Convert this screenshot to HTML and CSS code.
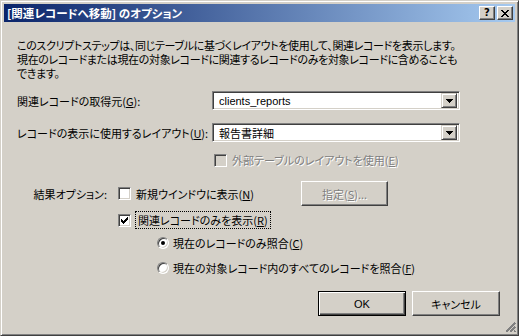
FILE: index.html
```html
<!DOCTYPE html>
<html>
<head>
    <title>[関連レコードへ移動] のオプション</title>
    <link rel="stylesheet" href="styles.css">
</head>
<body>
    <div class="dialog">
        <div class="titlebar">
            <span class="title">[関連レコードへ移動] のオプション</span>
            <div class="caption-buttons">
                <span class="cap-btn help">?</span>
                <span class="cap-btn close">
                    <svg width="8" height="7" viewBox="0 0 8 7" shape-rendering="crispEdges">
                        <path d="M0 0h2v1h-2zM6 0h2v1h-2zM1 1h2v1h-2zM5 1h2v1h-2zM2 2h4v1h-4zM3 3h2v1h-2zM2 4h4v1h-4zM1 5h2v1h-2zM5 5h2v1h-2zM0 6h2v1h-2zM6 6h2v1h-2z" fill="#000"/>
                    </svg>
                </span>
            </div>
        </div>

        <div class="content">
            <p class="intro">
                このスクリプトステップは、同じテーブルに基づくレイアウトを使用して、関連レコードを表示します。<br>
                現在のレコードまたは現在の対象レコードに関連するレコードのみを対象レコードに含めることも<br>
                できます。
            </p>

            <!-- related records source -->
            <div class="field-row first">
                <label class="field-label">関連レコードの取得元(<u>G</u>):</label>
                <div class="combo">
                    <span class="combo-value latin">clients_reports</span>
                    <span class="combo-arrow">
                        <svg width="7" height="4" viewBox="0 0 7 4" shape-rendering="crispEdges"><path d="M0 0h7v1h-1v1h-1v1h-1v1h-1v-1h-1v-1h-1v-1h-1z" fill="#000"/></svg>
                    </span>
                </div>
            </div>

            <div class="field-row">
                <label class="field-label">レコードの表示に使用するレイアウト(<u>U</u>):</label>
                <div class="combo">
                    <span class="combo-value">報告書詳細</span>
                    <span class="combo-arrow">
                        <svg width="7" height="4" viewBox="0 0 7 4" shape-rendering="crispEdges"><path d="M0 0h7v1h-1v1h-1v1h-1v1h-1v-1h-1v-1h-1v-1h-1z" fill="#000"/></svg>
                    </span>
                </div>
            </div>

            <div class="check-line external">
                <span class="checkbox disabled"></span>
                <span class="disabled-text">外部テーブルのレイアウトを使用(<u>E</u>)</span>
            </div>

            <!-- result options -->
            <div class="result-row">
                <span class="result-label">結果オプション:</span>
                <div class="check-line">
                    <span class="checkbox"></span>
                    <span>新規ウインドウに表示(<u>N</u>)</span>
                </div>
                <span class="button specify"><span class="disabled-text">指定(<u>S</u>)...</span></span>
            </div>

            <div class="check-line related">
                <span class="checkbox">
                    <svg width="7" height="7" viewBox="0 0 7 7" shape-rendering="crispEdges"><path d="M6 0h1v3h-1v1h-1v1h-1v1h-1v1h-1v-1h-1v-1h-1v-3h1v1h1v1h1v-1h1v-1h1v-1h1z" fill="#000"/></svg>
                </span>
                <span class="focus">関連レコードのみを表示(<u>R</u>)</span>
            </div>

            <div class="radio-line first-radio">
                <span class="radio on"></span>
                <span>現在のレコードのみ照合(<u>C</u>)</span>
            </div>
            <div class="radio-line">
                <span class="radio"></span>
                <span>現在の対象レコード内のすべてのレコードを照合(<u>F</u>)</span>
            </div>

            <div class="button-row">
                <span class="button default latin">OK</span>
                <span class="button">キャンセル</span>
            </div>
        </div>

        <svg class="grip" width="12" height="12" viewBox="0 0 12 12" shape-rendering="crispEdges">
            <g fill="#fff">
                <rect x="10" y="1" width="1" height="1"/><rect x="6" y="5" width="1" height="1"/><rect x="2" y="9" width="1" height="1"/>
            </g>
            <g stroke="#808080" stroke-width="2">
                <line x1="11" y1="2" x2="2" y2="11"/>
                <line x1="11" y1="6" x2="6" y2="11"/>
                <line x1="11" y1="10" x2="10" y2="11"/>
            </g>
        </svg>
    </div>
</body>
</html>
```

FILE: styles.css
```css
body {
    margin: 0;
    font-family: "Noto Sans CJK JP", sans-serif;
    font-size: 11px;
    line-height: 14px;
    font-feature-settings: "palt";
    color: #000;
}

u {
    text-decoration-thickness: 1px;
    text-underline-offset: 1px;
}

.dialog {
    position: relative;
    width: 519px;
    height: 336px;
    box-sizing: border-box;
    background-color: #d4d0c8;
    border: 1px solid;
    border-color: #d4d0c8 #404040 #404040 #d4d0c8;
    box-shadow: inset 1px 1px #fff, inset -1px -1px #808080;
    padding: 3px;
}

.titlebar {
    height: 18px;
    display: flex;
    align-items: center;
    justify-content: space-between;
    padding: 0 2px 0 3px;
    background: linear-gradient(to right, #0a246a, #a6caf0);
}

.title {
    color: #fff;
    font-weight: bold;
    font-size: 11.5px;
    line-height: 18px;
}

.caption-buttons {
    display: flex;
}

.cap-btn {
    width: 16px;
    height: 14px;
    box-sizing: border-box;
    display: flex;
    align-items: center;
    justify-content: center;
    background-color: #d4d0c8;
    border: 1px solid;
    border-color: #fff #404040 #404040 #fff;
    box-shadow: inset -1px -1px #808080;
    font-family: "DejaVu Sans", sans-serif;
    font-weight: bold;
    font-size: 10px;
}

.cap-btn.close {
    margin-left: 2px;
}

.content {
    padding: 16px 0 0 13px;
    white-space: nowrap;
}

.intro {
    margin: 0;
    letter-spacing: -0.35px;
}

.field-row {
    display: grid;
    grid-template-columns: 195px 248px;
    align-items: center;
    margin-top: 13px;
}

.field-row.first {
    margin-top: 11px;
}

.combo {
    height: 19px;
    box-sizing: border-box;
    display: flex;
    align-items: center;
    justify-content: space-between;
    background-color: #fff;
    border: 1px solid;
    border-color: #808080 #fff #fff #808080;
    box-shadow: inset 1px 1px #404040, inset -1px -1px #d4d0c8;
    padding: 0 2px 0 6px;
}

.latin {
    font-family: "Liberation Sans", "Noto Sans CJK JP", sans-serif;
}

.combo-arrow {
    width: 16px;
    height: 15px;
    box-sizing: border-box;
    display: flex;
    align-items: center;
    justify-content: center;
    background-color: #d4d0c8;
    border: 1px solid;
    border-color: #d4d0c8 #404040 #404040 #d4d0c8;
    box-shadow: inset 1px 1px #fff, inset -1px -1px #808080;
}

.check-line {
    display: flex;
    align-items: center;
    gap: 5px;
    height: 16px;
}

.check-line.external {
    margin: 10px 0 0 197px;
}

.checkbox {
    width: 13px;
    height: 13px;
    box-sizing: border-box;
    display: flex;
    align-items: center;
    justify-content: center;
    background-color: #fff;
    border: 1px solid;
    border-color: #808080 #fff #fff #808080;
    box-shadow: inset 1px 1px #404040, inset -1px -1px #d4d0c8;
}

.checkbox.disabled {
    background-color: #d4d0c8;
}

.disabled-text {
    color: #808080;
    text-shadow: 1px 1px #fff;
}

.result-row {
    display: grid;
    grid-template-columns: 101px 183px 87px;
    align-items: center;
    margin-top: 13px;
}

.result-label {
    text-align: right;
    padding-right: 11px;
}

.button {
    height: 25px;
    box-sizing: border-box;
    display: flex;
    align-items: center;
    justify-content: center;
    background-color: #d4d0c8;
    border: 1px solid;
    border-color: #fff #404040 #404040 #fff;
    box-shadow: inset -1px -1px #808080;
}

.check-line.related {
    margin: 6px 0 0 101px;
}

.focus {
    outline: 1px dotted #000;
    outline-offset: 0;
    padding: 0 2px;
    line-height: 16px;
}

.radio-line {
    display: flex;
    align-items: center;
    gap: 4px;
    height: 16px;
    margin: 9px 0 0 140px;
}

.radio-line.first-radio {
    margin-top: 7px;
}

.radio {
    position: relative;
    width: 12px;
    height: 12px;
    box-sizing: border-box;
    border-radius: 50%;
    background-color: #fff;
    border: 1px solid;
    border-color: #808080 #fff #fff #808080;
    box-shadow: inset 1px 1px #404040, inset -1px -1px #d4d0c8;
}

.radio.on::after {
    content: "";
    position: absolute;
    left: 3px;
    top: 3px;
    width: 4px;
    height: 4px;
    border-radius: 50%;
    background-color: #000;
}

.button-row {
    display: flex;
    gap: 6px;
    margin: 15px 0 0 301px;
}

.button-row .button {
    width: 88px;
}

.button.default {
    border-color: #000;
    box-shadow: inset 1px 1px #fff, inset -1px -1px #404040, inset -2px -2px #808080;
}

.grip {
    position: absolute;
    right: 2px;
    bottom: 2px;
}
```
